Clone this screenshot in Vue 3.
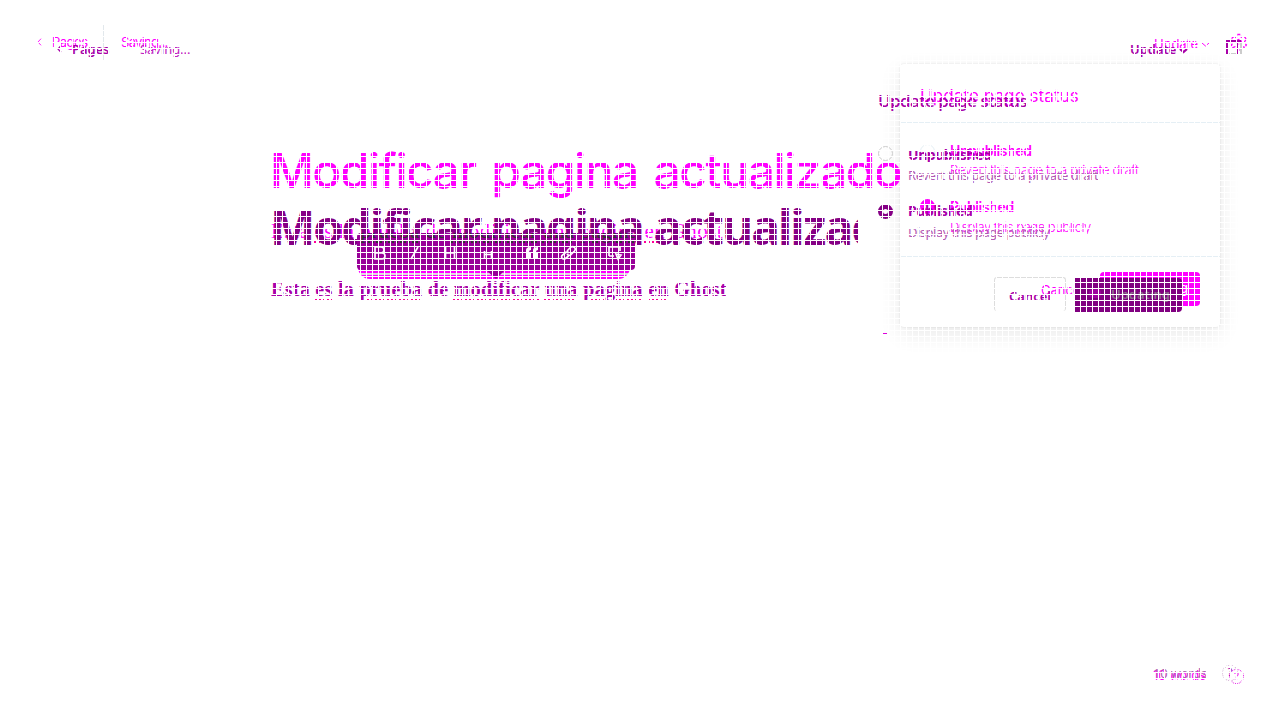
<script setup>
const layers = ['after', 'before']
const words = ['Esta', 'es', 'la', 'prueba', 'de', 'modificar', 'una', 'pagina', 'en', 'Ghost']
const checked = new Set(['es', 'prueba', 'modificar', 'una', 'pagina', 'en'])
</script>

<template>
  <div class="stage">
    <div class="card">
      <div class="card-head"></div>
      <div class="card-body"></div>
      <div class="card-foot"></div>
    </div>
    <div class="rule"></div>

    <section v-for="l in layers" :key="l" class="layer" :class="l">
      <header class="t back">
        <svg class="chev" width="5" height="8" viewBox="0 0 5 8"><path d="M4 .7 1 4l3 3.3" /></svg>
        <span>Pages</span>
      </header>
      <span class="t saving">Saving...</span>
      <span class="t update">Update</span>
      <svg class="down" width="9" height="6" viewBox="0 0 9 6"><path d="m1 1 3.5 3L8 1" /></svg>
      <svg v-if="l === 'after'" class="gear" width="18" height="18" viewBox="0 0 18 18">
        <circle cx="9" cy="9" r="2.5" />
        <path d="M7.3 1.5h3l.6 2.3 1.7 1 2.3-.7 1.5 2.6-1.7 1.6v2l1.7 1.6-1.5 2.6-2.3-.7-1.7 1-.6 2.2h-3l-.6-2.2-1.7-1-2.3.7-1.5-2.6 1.7-1.6v-2L1.200 6.700l1.500-2.600 2.300.7 1.700-1z" />
      </svg>
      <svg v-else class="panel" width="17" height="15" viewBox="0 0 17 15">
        <path d="M1 14V1h14M11 1v13" /><path class="soft" d="M3 14h7M15 2v12" />
      </svg>

      <h1 class="t title">Modificar pagina actualizado</h1>
      <p class="t para"><template v-for="(w, i) in words" :key="i"><span :class="{ spell: checked.has(w) }">{{ w }}</span>{{ ' ' }}</template></p>

      <h2 class="t heading">Update page status</h2>
      <i class="radio off"></i>
      <i class="radio on"></i>
      <b class="t un">Unpublished</b>
      <span class="t revert">Revert this page to a private draft</span>
      <b class="t pub">Published</b>
      <span class="t display">Display this page publicly</span>
      <span class="t cancel">Cancel</span>
      <div class="button"><i class="spin"></i><span>Updating</span></div>
      <span class="t count">10 words</span>
      <span class="t help">?</span>
    </section>

    <div class="bar-shadow"></div>
    <div class="bar">
      <svg width="278" height="46" viewBox="0 0 278 46">
        <path class="tip" d="M129 37h19l-9 9z" />
        <g class="ic">
          <path d="M18 14h6q3 0 3 3t-3 3h-6zm0 6h7q3 0 3 3t-3 3h-7z" />
          <path d="M61 14l-7 12" />
          <path d="M88.500 14v12M97.500 14v12M88.500 20h9" />
          <path d="M127.500 18v8M134.500 18v8M127.500 21.500h7" />
          <path class="solid" d="M169 17q0-3 5-3v3q-2 0-2 2h2v7h-5zM176 17q0-3 5-3v3q-2 0-2 2h2v7h-5z" />
          <path d="M210 18l4-4q2-1 3.500.5t0 3.500l-4 4q-2 1-3.500-1M212 20q-2-2-4 0l-3 2.500q-1 2 .5 3t3 0l3-2.500" />
          <path d="M252 23v-9h11v4M252 23h5M259 21l5 1-3 4z" />
        </g>
      </svg>
    </div>
    <div class="veil-clip" aria-hidden="true">
      <p class="t para veil"><template v-for="(w, i) in words" :key="i"><span :class="{ spell: checked.has(w) }">{{ w }}</span>{{ ' ' }}</template></p>
    </div>
    <i class="dash"></i>
    <div class="mesh"></div>
  </div>
</template>

<style>
html, body { margin: 0; background: #fff; }
</style>

<style scoped>
.stage { position: relative; width: 1280px; height: 720px; overflow: hidden; background: #fff; font-family: Inter, sans-serif; }
.layer { position: absolute; inset: 0; color: #f0f; --c: #f0f; }
.before { color: #a800a8; --c: #a800a8; }
.t { position: absolute; margin: 0; white-space: pre; font-size: 13px; line-height: 16px; font-weight: 400; }
svg { display: block; fill: none; stroke: var(--c); stroke-width: 1.3; }
.card { position: absolute; left: 900px; top: 64px; width: 320px; height: 263px; border-radius: 4px; background: #fff; box-shadow: 0 0 2px rgba(0,0,0,.12), 0 7px 22px rgba(0,0,0,.09); display: flex; flex-direction: column; }
.card-head { height: 58px; border-bottom: 1px solid #e5eff5; }
.card-body { flex: 1; border-bottom: 1px solid #e5eff5; }
.card-foot { height: 70px; }
.rule { position: absolute; left: 103px; top: 25px; width: 1px; height: 35px; background: #e2e8ec; }

.back { display: flex; align-items: center; gap: 10px; left: 37px; top: 34px; letter-spacing: -.5px; }
.after .chev { stroke-width: .9; }
.saving { left: 121px; top: 34px; letter-spacing: -.7px; }
.update { left: 1154px; top: 36px; letter-spacing: -.1px; }
.down { position: absolute; left: 1201px; top: 42px; }
.after .down { stroke-width: 1; }
.gear { position: absolute; left: 1230px; top: 33px; }
.after .gear { stroke-dasharray: 3 1.5; }
.title { left: 270px; top: 141px; font-size: 48px; line-height: 60px; font-weight: 500; letter-spacing: -1.5px; word-spacing: 4.500px; }
.para { left: 271px; top: 218px; font-family: "Liberation Serif", serif; font-size: 21px; line-height: 26px; letter-spacing: .42px; }
.spell { text-decoration: underline dotted #f09 2px; text-underline-offset: 3px; }
.heading { left: 920px; top: 86px; font-size: 17px; line-height: 20px; letter-spacing: .1px; }
.un { left: 950px; top: 143px; font-size: 14px; font-weight: 600; letter-spacing: -.35px; }
.revert { left: 950px; top: 162px; font-weight: 300; letter-spacing: -.32px; }
.pub { left: 950px; top: 199px; font-size: 14px; font-weight: 600; letter-spacing: -.35px; }
.display { left: 950px; top: 219px; font-weight: 300; letter-spacing: -.5px; }
.cancel { left: 1041px; top: 282px; }
.radio { position: absolute; box-sizing: border-box; left: 920px; width: 15px; height: 15px; border-radius: 50%; }
.radio.off { top: 144px; border: 1px solid #e5eff5; }
.radio.on { top: 199px; border: 5px solid #f0f; }
.button { position: absolute; left: 1100px; top: 272px; width: 100px; height: 34px; border-radius: 4px; background: #f0f; color: #fff; display: flex; align-items: center; justify-content: flex-end; gap: 10px; box-sizing: border-box; padding-right: 12px; padding-bottom: 3px; font-size: 13px; }
.count { left: 1153px; top: 667px; letter-spacing: -.3px; }
.help { left: 1229px; top: 669px; width: 13px; height: 13px; line-height: 13px; font-size: 10px; text-align: center; border: 1px dotted #e000e0; border-radius: 50%; }

.before .t, .before .button { font-family: "Noto Sans", sans-serif; }
.before .back { left: 57px; top: 41px; font-weight: 600; letter-spacing: -.1px; }
.before .saving { left: 140px; top: 41px; color: #c020c0; letter-spacing: -.05px; }
.before .update { left: 1130px; top: 41px; font-weight: 600; letter-spacing: 0; }
.before .down { left: 1179px; top: 48px; stroke-width: 2.3; }
.panel { position: absolute; left: 1226px; top: 40px; stroke-width: 2; }
.panel .soft { stroke: #ccc; }
.before .title { left: 270px; top: 197px; width: 588px; overflow: hidden; color: #850085; font-weight: 700; letter-spacing: -1.95px; word-spacing: 0; }
.before .para { top: 276px; font-family: "Liberation Serif", serif; font-size: 20px; font-weight: 700; letter-spacing: .31px; }
.before .heading { left: 878px; top: 91px; font-weight: 500; letter-spacing: -.55px; }
.before .un { left: 908px; top: 147px; font-weight: 700; letter-spacing: -.45px; }
.before .revert { left: 908px; top: 167px; color: #b35ab3; letter-spacing: -.4px; font-weight: 400; }
.before .pub { left: 908px; top: 203px; font-weight: 700; letter-spacing: -.45px; }
.before .display { left: 908px; top: 224px; color: #b35ab3; letter-spacing: -.5px; font-weight: 400; }
.before .radio { left: 878px; }
.before .radio.off { top: 146px; border-color: #ccc; }
.before .radio.on { top: 204px; border-color: #850085; }
.before .cancel { left: 994px; top: 277px; box-sizing: border-box; width: 72px; height: 34px; padding: 10px 14px 0; border: 1px solid #ddd; border-bottom: 0; border-radius: 3px; font-weight: 600; line-height: 17px; }
.before .button { left: 1075px; top: 278px; width: 107px; background: #800080; color: #8c708c; border-radius: 0 4px 4px 0; font-weight: 600; }
.spin { width: 12px; height: 9px; border-radius: 4px; }
.before .spin { background: #9e009e; }
.before .count { top: 665px; color: #b060b0; letter-spacing: -.2px; }
.before .help { left: 1222px; top: 665px; border-color: #c8a0c8; width: 14px; height: 14px; }

.bar-shadow { position: absolute; left: 358px; top: 240px; width: 272px; height: 39px; border-radius: 12px; background: linear-gradient(#f0f 33px, #ddd 33px, #ddd 35px, #f0f 35px); }
.bar { position: absolute; left: 357px; top: 233px; width: 278px; height: 37px; border-radius: 4px; background: #980098; }
.bar svg { overflow: visible; }
.bar .tip { fill: #980098; stroke: none; }
.ic { stroke: #fff; stroke-width: 1.7; }
.ic .solid { fill: #fff; stroke: none; }
.veil-clip { position: absolute; left: 357px; top: 233px; width: 278px; height: 12px; overflow: hidden; }
.veil { left: -86px; top: -15px; color: #333; }
.veil .spell { text-decoration-color: #333; }
.dash { position: absolute; left: 883px; top: 333px; width: 4px; height: 1px; background: #d0d; }
.mesh { position: absolute; inset: 0; background-image: linear-gradient(90deg, #fff 1px, transparent 1px), linear-gradient(#fff 1px, transparent 1px); background-size: 6px 6px; }
</style>
